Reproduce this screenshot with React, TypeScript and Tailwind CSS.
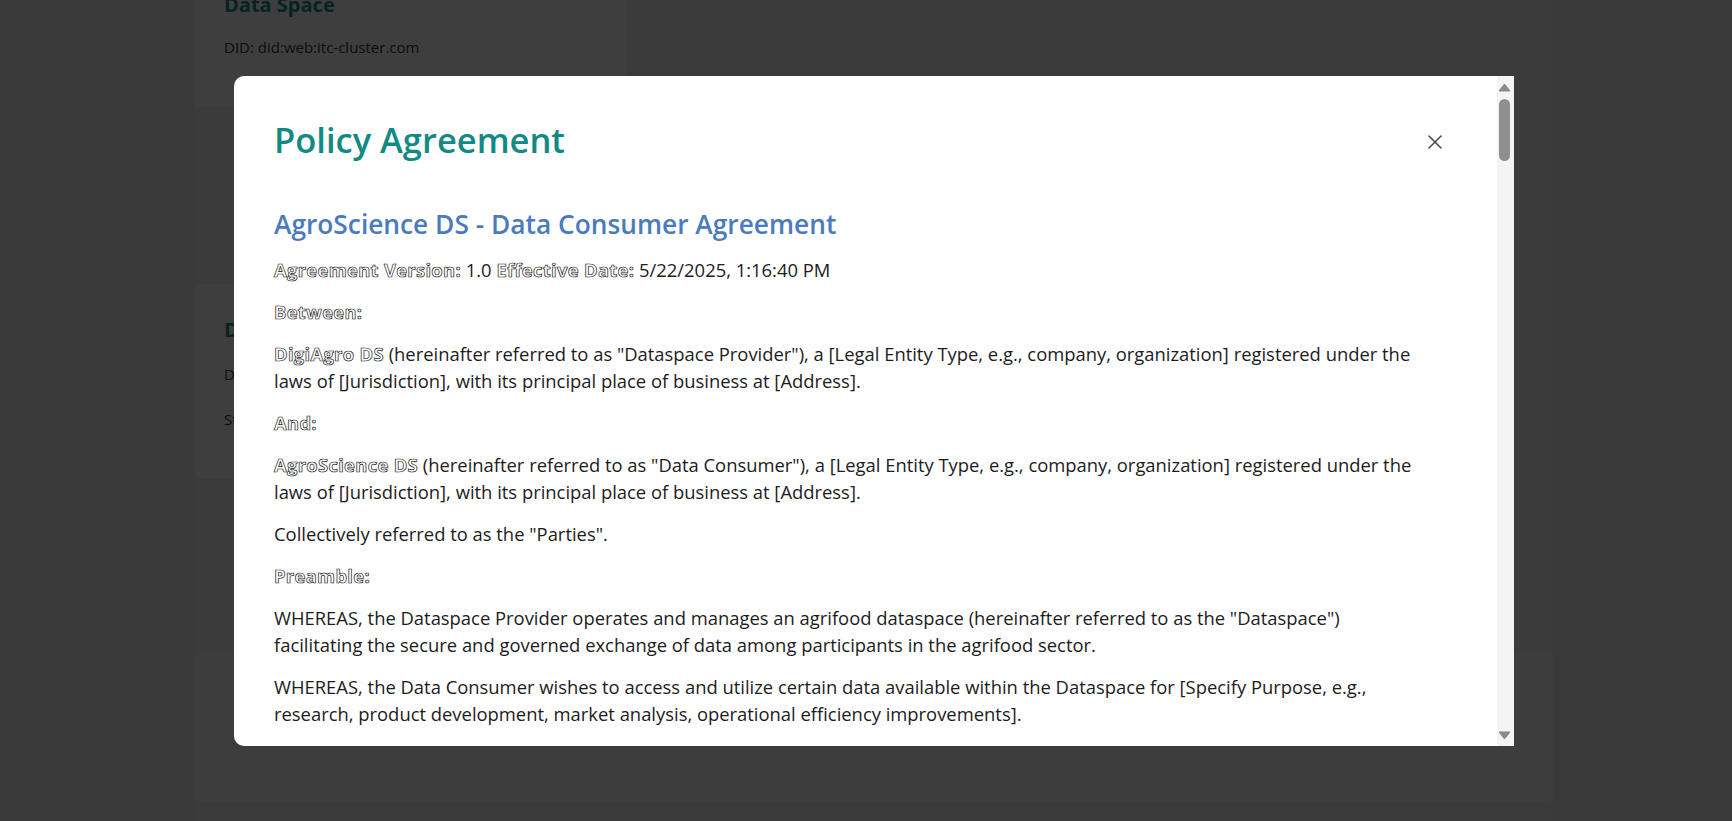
import { X } from 'lucide-react';

// hollow bold labels, as the agreement renders its <strong> parts
const label = 'font-bold tracking-[0.3px] text-white [-webkit-text-stroke:0.7px_#141414]';

interface Clause {
    heading: string;
    paragraphs: string[];
}

const clauses: Clause[] = [
    {
        heading: '1. Definitions',
        paragraphs: [
            '1.1 "Data" means any information, datasets, metadata or other content made available within the Dataspace by its participants.',
            '1.2 "Data Provider" means any participant of the Dataspace that makes Data available to other participants under the rules of the Dataspace.',
            '1.3 "Usage Policy" means the set of rules and conditions attached to specific Data, defining how such Data may be accessed, used and shared.',
            '1.4 "Connector" means the technical component used by participants to exchange Data within the Dataspace in a secure and sovereign manner.',
        ],
    },
    {
        heading: '2. Scope of the Agreement',
        paragraphs: [
            '2.1 This Agreement governs the access to and the use of Data made available within the Dataspace by the Data Consumer.',
            '2.2 The Data Consumer shall access Data only through the Connector and the infrastructure approved by the Dataspace Provider.',
        ],
    },
    {
        heading: '3. Rights of the Data Consumer',
        paragraphs: [
            '3.1 Subject to the terms of this Agreement and the applicable Usage Policies, the Data Consumer is granted a non-exclusive, non-transferable and revocable right to access and use the Data for the purpose specified above.',
            '3.2 The Data Consumer may participate in the governance bodies of the Dataspace in accordance with its rules of procedure.',
        ],
    },
    {
        heading: '4. Obligations of the Data Consumer',
        paragraphs: [
            '4.1 The Data Consumer shall comply with all Usage Policies attached to the Data and shall not use the Data for any purpose other than the one agreed.',
            '4.2 The Data Consumer shall not sell, sublicense or otherwise make the Data available to any third party without the prior written consent of the Data Provider.',
            '4.3 The Data Consumer shall implement appropriate technical and organizational measures to protect the Data against unauthorized access, loss or disclosure.',
        ],
    },
    {
        heading: '5. Obligations of the Dataspace Provider',
        paragraphs: [
            '5.1 The Dataspace Provider shall operate the Dataspace with due care and make reasonable efforts to ensure its availability, integrity and security.',
            '5.2 The Dataspace Provider shall inform the Data Consumer without undue delay of any incident that may affect the Data or its use.',
        ],
    },
    {
        heading: '6. Data Protection and Confidentiality',
        paragraphs: [
            '6.1 Where Data includes personal data, the Parties shall comply with the General Data Protection Regulation (EU) 2016/679 and any other applicable data protection law.',
            '6.2 Each Party shall keep confidential all non-public information received from the other Party and shall use it solely for the performance of this Agreement.',
        ],
    },
    {
        heading: '7. Liability',
        paragraphs: [
            '7.1 Neither Party shall be liable for any indirect or consequential damages arising out of or in connection with this Agreement, except in cases of gross negligence or wilful misconduct.',
            '7.2 The Dataspace Provider does not warrant the accuracy, completeness or fitness for a particular purpose of any Data made available by Data Providers.',
        ],
    },
    {
        heading: '8. Term and Termination',
        paragraphs: [
            '8.1 This Agreement enters into force on the Effective Date and remains in force for an indefinite period of time.',
            '8.2 Either Party may terminate this Agreement with thirty (30) days written notice. Upon termination, the Data Consumer shall cease all use of the Data and delete any copies thereof.',
        ],
    },
    {
        heading: '9. Governing Law and Dispute Resolution',
        paragraphs: [
            '9.1 This Agreement shall be governed by the laws of [Jurisdiction].',
            '9.2 The Parties shall seek to resolve any dispute amicably. Failing this, the dispute shall be submitted to the competent courts of [Jurisdiction].',
        ],
    },
];

export default function App() {
    return (
        <div className="relative h-screen w-full overflow-hidden bg-[#e6e6e6] font-['Open_Sans',sans-serif]">
            {/* Page behind the dialog */}
            <div className="flex h-full justify-center pl-4">
                <div className="-mt-[41px] flex w-[1358px] flex-col bg-[#ebebeb]">
                    <div className="w-[431px] bg-[#f8f8f8] px-[29px] pb-[48px] pt-[32px]">
                        <h2 className="text-xl font-bold leading-7 text-[#128a84]">Data Space</h2>
                        <p className="mt-[16px] text-[15px] leading-6 text-[#333]">DID: did:web:itc-cluster.com</p>
                    </div>
                    <div className="mt-[177px] w-[431px] rounded-lg bg-[#f8f8f8] px-[29px] pb-[48px] pt-[32px]">
                        <h2 className="text-xl font-bold leading-7 text-[#128a84]">Dataspace Provider</h2>
                        <p className="mt-[18px] text-[15px] leading-6 text-[#333]">DID: did:web:digiagro.com</p>
                        <p className="mt-[21px] text-[15px] leading-6 text-[#333]">Status: Active</p>
                    </div>
                    <div className="mt-[173px] h-[150px] rounded-lg bg-[#f3f3f3]" />
                </div>
            </div>

            {/* Dialog */}
            <div className="absolute inset-0 flex items-center justify-center bg-black/75 pl-4">
                <div className="flex h-[670px] w-[1280px] overflow-hidden rounded-l-[10px] bg-white">
                    <div className="flex-1 overflow-y-auto px-10 pt-[43px] pb-10 text-[#1c1c1c] [scrollbar-width:none]">
                        <div className="flex items-center justify-between">
                            <h1 className="text-[34.5px] font-semibold leading-[42px] text-[#128a84]">Policy Agreement</h1>
                            <button className="mr-[10px] mt-[4px] text-[#3d4550]">
                                <X className="h-6 w-6" strokeWidth={1.5} />
                            </button>
                        </div>

                        <h2 className="mt-[46px] text-[26.3px] font-semibold leading-[34px] text-[#4a7bbf]">
                            AgroScience DS - Data Consumer Agreement
                        </h2>

                        <div className="mt-[15px] text-[18.4px] leading-[27px]">
                            <p className="mb-[15px]">
                                <span className={label}>Agreement Version:</span> 1.0{' '}
                                <span className={label}>Effective Date:</span> 5/22/2025, 1:16:40 PM
                            </p>
                            <p className="mb-[15px]">
                                <span className={label}>Between:</span>
                            </p>
                            <p className="mb-[15px]">
                                <span className={label}>DigiAgro DS</span> (hereinafter referred to as "Dataspace Provider"), a
                                [Legal Entity Type, e.g., company, organization] registered under the
                                <br />
                                laws of [Jurisdiction], with its principal place of business at [Address].
                            </p>
                            <p className="mb-[15px]">
                                <span className={label}>And:</span>
                            </p>
                            <p className="mb-[15px]">
                                <span className={label}>AgroScience DS</span> (hereinafter referred to as "Data Consumer"), a [Legal
                                Entity Type, e.g., company, organization] registered under the
                                <br />
                                laws of [Jurisdiction], with its principal place of business at [Address].
                            </p>
                            <p className="mb-[15px]">Collectively referred to as the "Parties".</p>
                            <p className="mb-[15px]">
                                <span className={label}>Preamble:</span>
                            </p>
                            <p className="mb-[15px]">
                                WHEREAS, the Dataspace Provider operates and manages an agrifood dataspace (hereinafter referred to as
                                the "Dataspace")
                                <br />
                                facilitating the secure and governed exchange of data among participants in the agrifood sector.
                            </p>
                            <p className="mb-[15px]">
                                WHEREAS, the Data Consumer wishes to access and utilize certain data available within the Dataspace
                                for [Specify Purpose, e.g.,
                                <br />
                                research, product development, market analysis, operational efficiency improvements].
                            </p>
                            <p className="mb-[15px]">
                                NOW, THEREFORE, in consideration of the mutual covenants and agreements contained herein, the Parties
                                agree as follows:
                            </p>

                            {clauses.map((clause) => (
                                <div key={clause.heading}>
                                    <p className="mb-[15px]">
                                        <span className={label}>{clause.heading}</span>
                                    </p>
                                    {clause.paragraphs.map((text) => (
                                        <p key={text} className="mb-[15px]">
                                            {text}
                                        </p>
                                    ))}
                                </div>
                            ))}

                            <p className="mb-[15px]">
                                IN WITNESS WHEREOF, the Parties have caused this Agreement to be executed by their duly authorized
                                representatives as of the Effective Date.
                            </p>
                            <p className="mb-[15px]">
                                <span className={label}>For DigiAgro DS:</span> Name: ____________ Title: ____________ Date:
                                ____________
                            </p>
                            <p className="mb-[15px]">
                                <span className={label}>For AgroScience DS:</span> Name: ____________ Title: ____________ Date:
                                ____________
                            </p>
                        </div>
                    </div>

                    {/* Scrollbar of the dialog */}
                    <div className="flex w-[17px] shrink-0 flex-col items-center bg-[#f4f4f4] pr-[2px]">
                        <svg width="15" height="17" viewBox="0 0 15 17" className="shrink-0">
                            <path d="M2 15 L13 15 L7.5 8 Z" fill="#8a8a8a" stroke="#8a8a8a" strokeLinejoin="round" />
                        </svg>
                        <div className="mt-[6px] h-[62px] w-[11px] rounded-full bg-[#8f8f8f]" />
                        <div className="flex-1" />
                        <svg width="15" height="17" viewBox="0 0 15 17" className="shrink-0">
                            <path d="M2 3 L13 3 L7.5 10 Z" fill="#8a8a8a" stroke="#8a8a8a" strokeLinejoin="round" />
                        </svg>
                    </div>
                </div>
            </div>
        </div>
    );
}
